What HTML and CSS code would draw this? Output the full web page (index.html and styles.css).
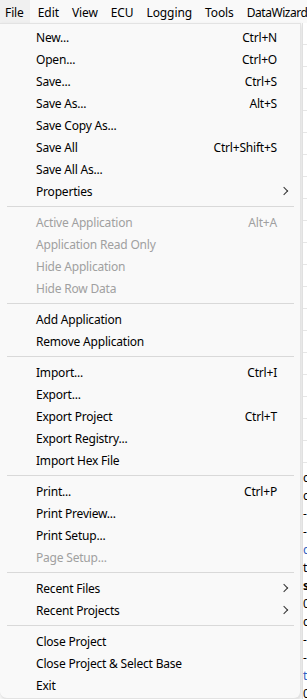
FILE: index.html
```html
<!DOCTYPE html>
<html lang="en">
<head>
    <meta charset="UTF-8">
    <title>File menu</title>
    <link rel="stylesheet" href="styles.css">
</head>
<body>

<div class="menubar">
    <span class="bar-item active">File</span>
    <span class="bar-item">Edit</span>
    <span class="bar-item">View</span>
    <span class="bar-item">ECU</span>
    <span class="bar-item">Logging</span>
    <span class="bar-item">Tools</span>
    <span class="bar-item wide">DataWizard</span>
</div>

<div class="workspace">
    <div class="menu">
        <div class="item"><span>New...</span><span class="key">Ctrl+N</span></div>
        <div class="item"><span>Open...</span><span class="key">Ctrl+O</span></div>
        <div class="item"><span>Save...</span><span class="key">Ctrl+S</span></div>
        <div class="item"><span>Save As...</span><span class="key">Alt+S</span></div>
        <div class="item"><span>Save Copy As...</span></div>
        <div class="item"><span>Save All</span><span class="key">Ctrl+Shift+S</span></div>
        <div class="item"><span>Save All As...</span></div>
        <div class="item sub"><span>Properties</span></div>
        <div class="sep"></div>
        <div class="item off"><span>Active Application</span><span class="key">Alt+A</span></div>
        <div class="item off"><span>Application Read Only</span></div>
        <div class="item off"><span>Hide Application</span></div>
        <div class="item off"><span>Hide Row Data</span></div>
        <div class="sep"></div>
        <div class="item"><span>Add Application</span></div>
        <div class="item"><span>Remove Application</span></div>
        <div class="sep"></div>
        <div class="item"><span>Import...</span><span class="key">Ctrl+I</span></div>
        <div class="item"><span>Export...</span></div>
        <div class="item"><span>Export Project</span><span class="key">Ctrl+T</span></div>
        <div class="item"><span>Export Registry...</span></div>
        <div class="item"><span>Import Hex File</span></div>
        <div class="sep"></div>
        <div class="item"><span>Print...</span><span class="key">Ctrl+P</span></div>
        <div class="item"><span>Print Preview...</span></div>
        <div class="item"><span>Print Setup...</span></div>
        <div class="item off"><span>Page Setup...</span></div>
        <div class="sep"></div>
        <div class="item sub"><span>Recent Files</span></div>
        <div class="item sub"><span>Recent Projects</span></div>
        <div class="sep"></div>
        <div class="item"><span>Close Project</span></div>
        <div class="item"><span>Close Project &amp; Select Base</span></div>
        <div class="item"><span>Exit</span></div>
    </div>

    <!-- window behind the menu, only its left edge shows -->
    <div class="behind">
        <div class="pane"></div>
        <div class="rows">
            <span>c</span><span>c</span><span>-</span><span>-</span><span class="blue">c</span><span>t</span>
            <span class="bold">s</span><span>0</span><span>c</span><span>-</span><span>-</span><span class="blue">t</span><span>0</span>
        </div>
    </div>
</div>

</body>
</html>
```

FILE: styles.css
```css
html, body {
    margin: 0;
    padding: 0;
}
body {
    font-family: "Noto Sans", "Open Sans", sans-serif;
    font-size: 12px;
    color: #000;
    background-color: #fafafa;
    width: 307px;
    height: 699px;
    overflow: hidden;
}
.menubar {
    display: flex;
    height: 23px;
    background-color: #f9f9f9;
    white-space: nowrap;
}
.bar-item {
    padding: 3px 6.5px 0 6.5px;
    line-height: 20px;
    letter-spacing: -0.1px;
}
.bar-item:first-child {
    padding-left: 5px;
    margin-right: 1px;
}
.bar-item.active {
    background-color: #f0f0f0;
}
.bar-item.wide {
    padding-right: 0;
    letter-spacing: -0.45px;
}
.workspace {
    display: flex;
    height: 676px;
}
.menu {
    width: 300px;
    flex-shrink: 0;
    padding: 2px 0;
    background-color: #f9f9f9;
    border: 1px solid #e3e3e3;
    border-left: none;
    border-radius: 0 0 7px 7px;
    box-shadow: 1px 2px 4px rgba(0, 0, 0, 0.12);
}
.item {
    display: flex;
    align-items: center;
    height: 22px;
    padding: 0 23px 0 36px;
    white-space: nowrap;
    letter-spacing: -0.2px;
}
.item .key {
    margin-left: auto;
}
.item.sub::after {
    content: "";
    margin-left: auto;
    margin-right: -10px;
    width: 5px;
    height: 5px;
    border-right: 1px solid #333;
    border-top: 1px solid #333;
    transform: rotate(45deg);
}
.item.off {
    color: #a0a0a0;
}
.sep {
    height: 1px;
    margin: 4px 6px 4px 7px;
    background-color: #d9d9d9;
}
.behind {
    flex: 1;
    display: flex;
    flex-direction: column;
    background-color: #ffffff;
    border-left: 1px solid #e0e0e0;
    margin-left: 1px;
}
.pane {
    height: 446px;
    flex-shrink: 0;
    background: repeating-linear-gradient(#ffffff 0, #ffffff 21px, #e6e6e6 21px, #e6e6e6 22px);
}
.rows {
    display: flex;
    flex-direction: column;
    font-size: 12px;
    line-height: 18px;
}
.rows .blue {
    color: #3060c0;
}
.rows .bold {
    font-weight: bold;
}
```
